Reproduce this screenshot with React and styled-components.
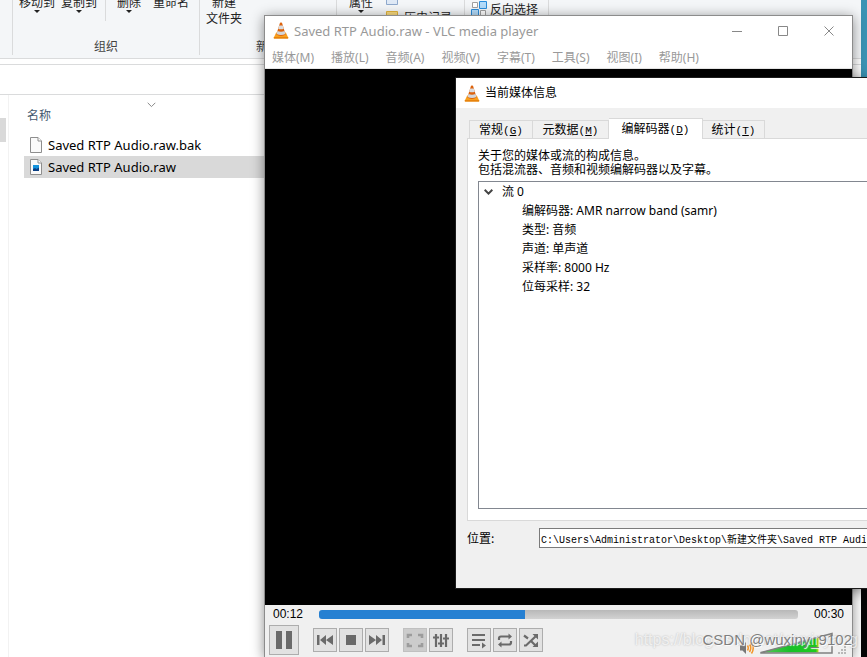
import React from 'react';
import styled, { createGlobalStyle, css } from 'styled-components';

const uiFont = `'Noto Sans', 'Noto Sans CJK SC', sans-serif`;
const cjkFont = `'Noto Sans CJK SC', sans-serif`;

const GlobalStyle = createGlobalStyle`
  * { box-sizing: border-box; }
  html, body { margin: 0; height: 100%; overflow: hidden; }
  #root { height: 100%; }
  body { font: 12px/16px ${cjkFont}; color: #000; }
  button, input { font: inherit; color: inherit; margin: 0; padding: 0; }
  button { background: none; border: 0; }
`;

const Desktop = styled.div`
  position: relative;
  height: 100%;
  overflow: hidden;
  background: linear-gradient(#3b93b4 0 20%, #050505 20%);
`;

/* ---------- file explorer ---------- */

const Explorer = styled.main`
  display: flex;
  flex-direction: column;
  height: 100%;
  margin-right: 6px;
  background: #fff;
`;

const Ribbon = styled.div`
  display: flex;
  align-items: flex-end;
  height: 59px;
  padding-bottom: 3px;
  overflow: hidden;
  background: #f4f6f8;
  border-bottom: 1px solid #dadbdc;
  color: #222;
`;

const RibbonGroup = styled.section`
  flex: none;
  display: flex;
  flex-direction: column;
  width: ${(p) => p.$width}px;
  height: 61px;
  border-right: 1px solid #dadbdc;
`;

const Commands = styled.div`
  display: flex;
  height: 43px;
  padding-left: ${(p) => p.$indent || 0}px;
`;

const Command = styled.button`
  display: flex;
  flex-direction: column;
  align-items: center;
  height: 32px;
  line-height: 16px;
  margin-right: ${(p) => p.$gap || 0}px;
  white-space: nowrap;
`;

const CommandSplit = styled.span`
  width: 1px;
  height: 27px;
  margin-right: 11px;
  background: #dadbdc;
`;

const SideCommands = styled.div`
  display: flex;
  flex-direction: column;
  margin-top: ${(p) => p.$drop || 0}px;
`;

const SideCommand = styled.button`
  display: flex;
  align-items: center;
  gap: ${(p) => p.$gap || 3}px;
  height: 18px;
  white-space: nowrap;
`;

const Caption = styled.div`
  height: 18px;
  line-height: 18px;
  text-align: center;
  color: #444;
`;

const AddressBar = styled.div`
  flex: none;
  height: 31px;
  margin-top: 5px;
  border: solid #dadbdc;
  border-width: 1px 0;
`;

const ExplorerBody = styled.div`
  flex: 1;
  display: flex;
`;

const NavPane = styled.div`
  width: 9px;
  padding-top: 23px;
  border-right: 1px solid #f2f2f2;
`;

const NavThumb = styled.div`
  width: 6px;
  height: 24px;
  background: #d9d9d9;
`;

const FileTable = styled.table`
  flex: 1;
  margin: 8px 0 0 15px;
  border-collapse: collapse;
  align-self: flex-start;
  font-family: ${uiFont};
  font-size: 13px;
`;

const NameHeader = styled.th`
  position: relative;
  height: 31px;
  padding: 0 0 7px 3px;
  text-align: left;
  font: 12px/16px ${cjkFont};
  color: #44586f;
  svg { position: absolute; top: -1px; left: 123px; }
`;

const FileRow = styled.tr`
  background: ${(p) => (p.$selected ? '#d9d9d9' : 'transparent')};
`;

const FileCell = styled.td`
  height: 22px;
  padding: 0 0 1px 6px;
`;

const FileName = styled.span`
  display: flex;
  align-items: center;
  gap: 6px;
`;

/* ---------- windows ---------- */

const PlayerWindow = styled.section`
  position: absolute;
  top: 15px;
  left: 264px;
  right: 14px;
  bottom: 0;
  display: flex;
  flex-direction: column;
  background: #fff;
  border: solid #8c8c8c;
  border-width: 1px 1px 0;
  box-shadow: 0 2px 12px rgba(0, 0, 0, 0.45);
`;

const TitleBar = styled.header`
  display: flex;
  align-items: center;
  height: ${(p) => (p.$muted ? 29 : 30)}px;
  padding-left: 8px;
  gap: 5px;
  font-family: ${uiFont};
  font-size: ${(p) => (p.$muted ? 13 : 12)}px;
  color: ${(p) => (p.$muted ? '#999' : '#000')};
  background: #fff;
`;

const TitleText = styled.h1`
  flex: 1;
  margin: 0;
  font: inherit;
`;

const CaptionButtonRow = styled.div`
  display: flex;
`;

const CaptionButton = styled.button`
  display: grid;
  place-items: center;
  width: 46px;
  height: 28px;
  color: #888;
`;

const MenuBar = styled.nav`
  display: flex;
  height: 24px;
  padding: 3px 0 0 7px;
  border-bottom: 1px solid #e8e8e8;
  gap: 17px;
  font-family: ${uiFont};
`;

const MenuItem = styled.button`
  height: 20px;
  color: #999;
  white-space: nowrap;
`;

const VideoArea = styled.div`
  flex: 1;
  background: #000;
`;

const ControlPanel = styled.footer`
  position: relative;
  height: 52px;
  background: #f0f0f0;
`;

const SeekRow = styled.div`
  display: flex;
  align-items: center;
  height: 18px;
  padding: 0 8px;
  gap: 16px;
  font: 12px/18px 'Liberation Sans', sans-serif;
`;

const Seek = styled.input`
  flex: 1;
  min-width: 0;
  height: 9px;
  appearance: none;
  border-radius: 3px;
  background: linear-gradient(90deg, #2680d2 0 43%, transparent 43%),
    linear-gradient(#b8b8b8, #d2d2d2);
  &::-webkit-slider-thumb { appearance: none; width: 0; height: 0; }
`;

const ButtonRow = styled.div`
  display: flex;
  align-items: center;
  height: 34px;
  padding: 0 4px;
`;

const ButtonGroup = styled.div`
  display: flex;
  gap: 2px;
  margin-right: ${(p) => (p.$last ? 0 : 14)}px;
`;

const PlayerButton = styled.button`
  display: grid;
  place-items: center;
  width: ${(p) => (p.$large ? 30 : 24)}px;
  height: ${(p) => (p.$large ? 30 : 24)}px;
  color: #6a6a6a;
  background: #e2e2e2;
  border: 1px solid #adadad;
  ${(p) => p.disabled && css`
    color: #9c9c9c;
    background: #cccccc;
    border-color: #c0c0c0;
  `}
`;

const VolumeBox = styled.div`
  display: flex;
  align-items: flex-end;
  align-self: flex-end;
  margin-left: auto;
  padding-right: 1px;
  gap: 5px;
`;

const Watermark = styled.div`
  position: absolute;
  right: ${(p) => (p.$faint ? -6 : 0)}px;
  bottom: 7px;
  font: ${(p) => (p.$faint ? 16 : 15)}px/20px 'Liberation Sans', sans-serif;
  white-space: nowrap;
  pointer-events: none;
  color: ${(p) => (p.$faint ? 'rgba(255,255,255,0.7)' : 'rgba(120,120,120,0.95)')};
  text-shadow: ${(p) => (p.$faint ? '0 0 2px rgba(0,0,0,0.25)' : '1px 1px 1px #fff')};
`;

/* ---------- media information dialog ---------- */

const Dialog = styled.section`
  position: absolute;
  top: 77px;
  left: 455px;
  right: -1px;
  display: flex;
  flex-direction: column;
  background: #f0f0f0;
  border: 1px solid #1c1c1c;
  box-shadow: 0 2px 12px rgba(0, 0, 0, 0.45);
`;

const DialogBody = styled.div`
  padding: 10px 0 40px 11px;
`;

const Tabs = styled.div`
  display: flex;
  align-items: flex-end;
  height: 20px;
  padding-left: 2px;
`;

const Tab = styled.button`
  position: relative;
  height: ${(p) => (p.$active ? 21 : 18)}px;
  width: ${(p) => p.$width}px;
  margin-bottom: ${(p) => (p.$active ? -1 : 0)}px;
  background: ${(p) => (p.$active ? '#fff' : '#f0f0f0')};
  border: 1px solid #d9d9d9;
  border-bottom: 0;
  white-space: nowrap;
  & + & { border-left-width: ${(p) => (p.$active ? 1 : 0)}px; }
`;

const Mnemonic = styled.span`
  font: 11px/16px 'Liberation Mono', monospace;
`;

const TabPanel = styled.div`
  padding: 9px 0 11px 10px;
  background: #fff;
  border: 1px solid #d9d9d9;
  border-right: 0;
`;

const Description = styled.p`
  margin: 0 0 5px;
  line-height: 14px;
`;

const Tree = styled.ul`
  height: 328px;
  margin: 0;
  padding: 0;
  list-style: none;
  border: 1px solid #828790;
  border-right: 0;
  font-family: ${uiFont};
  line-height: 19px;
`;

const TreeBranch = styled.div`
  display: flex;
  align-items: center;
  gap: 9px;
  padding-left: 5px;
`;

const TreeChildren = styled.ul`
  margin: 0;
  padding: 0 0 0 43px;
  list-style: none;
`;

const LocationRow = styled.div`
  display: flex;
  align-items: center;
  margin-top: 7px;
  height: 20px;
`;

const LocationLabel = styled.label`
  width: 72px;
`;

const LocationInput = styled.input`
  flex: 1;
  min-width: 0;
  height: 20px;
  padding: 0 1px;
  background: #fff;
  border: 1px solid #7a7a7a;
  border-right: 0;
  border-radius: 0;
  font: 10px/16px 'Liberation Mono', 'Noto Sans CJK SC', monospace;
`;

/* ---------- drawings ---------- */

const DropArrow = () => (
  <svg width="6" height="3" viewBox="0 0 6 3"><path d="M0 0h6L3 3z" fill="#222" /></svg>
);

const Chevron = ({ color = '#888', width = 1 }) => (
  <svg width="9" height="6" viewBox="0 0 9 6" fill="none" stroke={color} strokeWidth={width}>
    <path d="M.7.8l3.800 3.800L8.300.8" />
  </svg>
);

const Cone = () => (
  <svg width="16" height="17" viewBox="0 0 16 17">
    <path d="M3.200 10.500h9.600l2.500 5.300q.1.700-.7.700H1.400q-.8 0-.7-.7z" fill="#f9a01c" />
    <path d="M.8 15.300h14.400v.6q0 .6-.6.6H1.400q-.6 0-.6-.6z" fill="#e07a08" />
    <path d="M7 .8Q8 .1 9 .8l3.600 11.800Q8 15.200 3.400 12.600z" fill="#dd620c" />
    <path d="M6.200 3.600h3.600l1 3.200q-2.800 1-5.600 0z" fill="#d9dcdf" />
    <path d="M4.500 9l-.9 3q4.400 2.200 8.800 0L11.500 9q-3.500 1.300-7 0z" fill="#d3d6d9" />
  </svg>
);

const FileIcon = ({ picture }) => (
  <svg width="12" height="16" viewBox="0 0 12 16">
    <path d="M.5.5h7.500l3.500 3.500v11.500H.5z" fill="#fafafa" stroke="#8e8e8e" />
    <path d="M8 .5V4h3.500" fill="#fff" stroke="#8e8e8e" />
    {picture && <path d="M3 6h6v6H3z" fill="#1593dd" />}
    {picture && <path d="M3 10l2-1 1.500 1L9 8.500V12H3z" fill="#0b3f84" />}
  </svg>
);

const SelectIcon = () => (
  <svg width="16" height="16" viewBox="0 0 16 16" strokeWidth="1">
    <g fill="#b5dcfa" stroke="#2b8ddb">
      <path d="M8.500.5h7v7h-7zM.5 8.500h7v7h-7z" />
    </g>
    <g fill="#fff" stroke="#a0a0a0">
      <path d="M1.500 1.500h5v5h-5zM9.500 9.500h5v5h-5z" />
    </g>
  </svg>
);

const FolderIcon = () => (
  <svg width="12" height="12" viewBox="0 0 12 12">
    <path d="M.5.5h11v11H.5z" fill="#fbdc80" stroke="#e3b53c" />
  </svg>
);

const OpenIcon = () => (
  <svg width="12" height="12" viewBox="0 0 12 12">
    <path d="M.5.5h11v11H.5z" fill="#dfe9f6" stroke="#8fa9cd" />
    <path d="M4 6h5" stroke="#5b86c4" />
  </svg>
);

const captionShapes = {
  最小化: 'M0 5.500h10',
  最大化: 'M.5.500h9v9h-9z',
  关闭: 'M.5.500l9 9M9.500.500l-9 9',
};

const glyphs = {
  pause: <path d="M0 0h6v18H0zM10 0h6v18h-6z" fill="currentColor" />,
  prev: <path d="M0 1h2.500v10H0zM9 1v10L3 6zM16 1v10l-7-5z" fill="currentColor" />,
  stop: <path d="M3 1h10v10H3z" fill="currentColor" />,
  next: <path d="M13.500 1H16v10h-2.500zM7 1v10l6-5zM0 1v10l7-5z" fill="currentColor" />,
  full: (
    <path d="M1 4V1h4M11 1h4v3M15 9v3h-4M5 12H1V9" fill="none" stroke="currentColor" strokeWidth="2.600" />
  ),
  equalizer: (
    <path d="M3 0v13M8 0v13M13 0v13M0 3.500h6M5 9.500h6M10 4.500h6" fill="none" stroke="currentColor" strokeWidth="2.200" />
  ),
  playlist: (
    <>
      <path d="M1 1h13M1 6h13M1 11h8" fill="none" stroke="currentColor" strokeWidth="2.200" />
      <path d="M11 8.500v6l4-3z" fill="currentColor" />
    </>
  ),
  loop: (
    <>
      <path d="M2 6V4.500q0-2 2-2h8M14 7v1.500q0 2-2 2H4" fill="none" stroke="currentColor" strokeWidth="2.200" />
      <path d="M11.500-.5v6l3.500-3zM4.500 7.500v6L1 10.500z" fill="currentColor" />
    </>
  ),
  shuffle: (
    <>
      <path d="M1 1.500l4 3M1 11.500h2L12.500 2.500M8.500 7.500l4 4" fill="none" stroke="currentColor" strokeWidth="2.200" />
      <path d="M9.500 0H15v5.500zM9.500 13H15V7.500z" fill="currentColor" />
    </>
  ),
};

const Glyph = ({ name }) =>
  name === 'pause' ? (
    <svg width="16" height="18" viewBox="0 0 16 18">{glyphs.pause}</svg>
  ) : (
    <svg width="16" height="13" viewBox="0 0 16 13" overflow="visible">{glyphs[name]}</svg>
  );

const Speaker = () => (
  <svg width="16" height="16" viewBox="0 0 16 16">
    <path d="M1 4.500h2.500L7 1v12L3.500 9.500H1z" fill="#777" />
    <path d="M8.500 4.500q1.500 2.500 0 5M10.500 3q2.500 4 0 8M12.500 1.500q3.500 5.500 0 11" fill="none" stroke="#f39325" strokeWidth="1.500" />
  </svg>
);

const VolumeWedge = () => (
  <svg width="73" height="25" viewBox="0 0 73 25">
    <defs>
      <linearGradient id="level">
        <stop offset="0" stopColor="#5cc45c" />
        <stop offset=".5" stopColor="#18c028" />
        <stop offset=".95" stopColor="#1ecb1e" />
        <stop offset="1" stopColor="#c8d820" />
      </linearGradient>
    </defs>
    <path d="M1 20.500L72 1.500v19.500H1z" fill="#f0f0f0" />
    <path d="M2 20L58.500 5v15.500H2z" fill="url(#level)" />
    <path d="M1 20.500L72 1.500v19.500H1z" fill="none" stroke="#808080" strokeWidth="1.500" />
  </svg>
);

const Grip = () => (
  <svg width="9" height="11" viewBox="0 0 9 11" fill="#b8b8b8">
    <path d="M6 0h2v2H6zM3 3h2v2H3zM6 3h2v2H6zM0 6h2v2H0zM3 6h2v2H3zM6 6h2v2H6z" />
  </svg>
);

/* ---------- content ---------- */

const files = [
  { name: 'Saved RTP Audio.raw.bak' },
  { name: 'Saved RTP Audio.raw', picture: true },
];

const menus = ['媒体(M)', '播放(L)', '音频(A)', '视频(V)', '字幕(T)', '工具(S)', '视图(I)', '帮助(H)'];

const tabs = [
  { label: '常规', key: 'G', width: 64 },
  { label: '元数据', key: 'M', width: 76 },
  { label: '编解码器', key: 'D', width: 94, active: true },
  { label: '统计', key: 'T', width: 62 },
];

const details = ['编解码器: AMR narrow band (samr)', '类型: 音频', '声道: 单声道', '采样率: 8000 Hz', '位每采样: 32'];

const buttonGroups = [
  [['pause', '暂停']],
  [['prev', '上一个'], ['stop', '停止'], ['next', '下一个']],
  [['full', '全屏'], ['equalizer', '扩展设置']],
  [['playlist', '播放列表'], ['loop', '循环'], ['shuffle', '随机']],
];

function FileExplorer() {
  return (
    <Explorer>
      <Ribbon>
        <RibbonGroup $width={13} />
        <RibbonGroup $width={187}>
          <Commands $indent={6}>
            <Command $gap={6}>移动到<DropArrow /></Command>
            <Command $gap={8}>复制到<DropArrow /></Command>
            <CommandSplit />
            <Command $gap={12}>删除<DropArrow /></Command>
            <Command>重命名</Command>
          </Commands>
          <Caption>组织</Caption>
        </RibbonGroup>
        <RibbonGroup $width={137}>
          <Commands $indent={6}>
            <Command><span>新建</span><span>文件夹</span></Command>
          </Commands>
          <Caption>新建</Caption>
        </RibbonGroup>
        <RibbonGroup $width={128}>
          <Commands $indent={12}>
            <Command $gap={13}>属性<DropArrow /></Command>
            <SideCommands $drop={-4}>
              <SideCommand aria-label="打开"><OpenIcon /></SideCommand>
              <SideCommand $gap={6}><FolderIcon />历史记录</SideCommand>
            </SideCommands>
          </Commands>
        </RibbonGroup>
        <RibbonGroup $width={84}>
          <Commands $indent={6}>
            <SideCommands $drop={6}>
              <SideCommand><SelectIcon />反向选择</SideCommand>
            </SideCommands>
          </Commands>
        </RibbonGroup>
      </Ribbon>
      <AddressBar />
      <ExplorerBody>
        <NavPane><NavThumb /></NavPane>
        <FileTable>
          <thead>
            <tr><NameHeader scope="col">名称<Chevron /></NameHeader></tr>
          </thead>
          <tbody>
            {files.map((f) => (
              <FileRow key={f.name} $selected={f.picture}>
                <FileCell><FileName><FileIcon picture={f.picture} />{f.name}</FileName></FileCell>
              </FileRow>
            ))}
          </tbody>
        </FileTable>
      </ExplorerBody>
    </Explorer>
  );
}

function CaptionButtons() {
  return (
    <CaptionButtonRow>
      {Object.entries(captionShapes).map(([label, d]) => (
        <CaptionButton key={label} aria-label={label}>
          <svg width="10" height="10" viewBox="0 0 10 10" fill="none" stroke="currentColor"><path d={d} /></svg>
        </CaptionButton>
      ))}
    </CaptionButtonRow>
  );
}

function Player() {
  return (
    <PlayerWindow>
      <TitleBar $muted>
        <Cone />
        <TitleText>Saved RTP Audio.raw - VLC media player</TitleText>
        <CaptionButtons />
      </TitleBar>
      <MenuBar>
        {menus.map((m) => <MenuItem key={m}>{m}</MenuItem>)}
      </MenuBar>
      <VideoArea />
      <ControlPanel>
        <SeekRow>
          <span>00:12</span>
          <Seek type="range" aria-label="播放进度" min="0" max="30" defaultValue="12" />
          <span>00:30</span>
        </SeekRow>
        <ButtonRow>
          {buttonGroups.map((group, i) => (
            <ButtonGroup key={group[0][0]} $last={i === buttonGroups.length - 1}>
              {group.map(([name, label]) => (
                <PlayerButton key={name} aria-label={label} $large={name === 'pause'} disabled={name === 'full'}>
                  <Glyph name={name} />
                </PlayerButton>
              ))}
            </ButtonGroup>
          ))}
          <VolumeBox><Speaker /><VolumeWedge /><Grip /></VolumeBox>
        </ButtonRow>
        <Watermark $faint>https://blog.csdn.net/wuxinyang</Watermark>
        <Watermark>CSDN @wuxiny_9102</Watermark>
      </ControlPanel>
    </PlayerWindow>
  );
}

function MediaInfo() {
  return (
    <Dialog role="dialog" aria-label="当前媒体信息">
      <TitleBar>
        <Cone />
        <TitleText>当前媒体信息</TitleText>
      </TitleBar>
      <DialogBody>
        <Tabs role="tablist">
          {tabs.map((t) => (
            <Tab key={t.key} role="tab" aria-selected={!!t.active} $active={t.active} $width={t.width}>
              {t.label}<Mnemonic>(<u>{t.key}</u>)</Mnemonic>
            </Tab>
          ))}
        </Tabs>
        <TabPanel role="tabpanel">
          <Description>
            关于您的媒体或流的构成信息。<br />包括混流器、音频和视频编解码器以及字幕。
          </Description>
          <Tree>
            <li>
              <TreeBranch><Chevron color="#444" width={2} />流 0</TreeBranch>
              <TreeChildren>
                {details.map((d) => <li key={d}>{d}</li>)}
              </TreeChildren>
            </li>
          </Tree>
        </TabPanel>
        <LocationRow>
          <LocationLabel htmlFor="location">位置:</LocationLabel>
          <LocationInput
            id="location"
            defaultValue={'C:\\Users\\Administrator\\Desktop\\新建文件夹\\Saved RTP Audio.raw'}
          />
        </LocationRow>
      </DialogBody>
    </Dialog>
  );
}

export default function App() {
  return (
    <Desktop>
      <GlobalStyle />
      <FileExplorer />
      <Player />
      <MediaInfo />
    </Desktop>
  );
}
